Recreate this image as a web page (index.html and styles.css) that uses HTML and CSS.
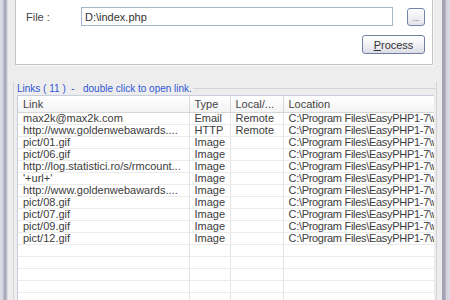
FILE: index.html
```html
<!DOCTYPE html>
<html>
<head>
    <meta charset="UTF-8">
    <title>Link Extractor</title>
    <link rel="stylesheet" href="styles.css">
</head>
<body>
    <div class="window">
        <div class="frame frame-left"></div>
        <div class="client">
            <div class="top-panel">
                <div class="file-row">
                    <label class="file-label" for="filePath">File :</label>
                    <input id="filePath" class="file-input" type="text" value="D:\index.php">
                    <button class="browse-btn">...</button>
                </div>
                <div class="action-row">
                    <button class="process-btn"><u>P</u>rocess</button>
                </div>
            </div>

            <div class="group">
                <div class="group-title">
                    <span class="group-caption">Links ( 11 ) &nbsp;- &nbsp; double click to open link.</span>
                    <span class="group-line"></span>
                </div>
                <div class="list">
                    <table class="links">
                        <colgroup>
                            <col class="c-link">
                            <col class="c-type">
                            <col class="c-local">
                            <col class="c-loc">
                        </colgroup>
                        <thead>
                            <tr>
                                <th>Link</th>
                                <th>Type</th>
                                <th>Local/...</th>
                                <th>Location</th>
                            </tr>
                        </thead>
                        <tbody>
                            <tr><td>max2k@max2k.com</td><td>Email</td><td>Remote</td><td class="loc">C:\Program Files\EasyPHP1-7\www\</td></tr>
                            <tr><td>http://www.goldenwebawards....</td><td>HTTP</td><td>Remote</td><td class="loc">C:\Program Files\EasyPHP1-7\www\</td></tr>
                            <tr><td>pict/01.gif</td><td>Image</td><td></td><td class="loc">C:\Program Files\EasyPHP1-7\www\</td></tr>
                            <tr><td>pict/06.gif</td><td>Image</td><td></td><td class="loc">C:\Program Files\EasyPHP1-7\www\</td></tr>
                            <tr><td>http://log.statistici.ro/s/rmcount...</td><td>Image</td><td></td><td class="loc">C:\Program Files\EasyPHP1-7\www\</td></tr>
                            <tr><td>'+url+'</td><td>Image</td><td></td><td class="loc">C:\Program Files\EasyPHP1-7\www\</td></tr>
                            <tr><td>http://www.goldenwebawards....</td><td>Image</td><td></td><td class="loc">C:\Program Files\EasyPHP1-7\www\</td></tr>
                            <tr><td>pict/08.gif</td><td>Image</td><td></td><td class="loc">C:\Program Files\EasyPHP1-7\www\</td></tr>
                            <tr><td>pict/07.gif</td><td>Image</td><td></td><td class="loc">C:\Program Files\EasyPHP1-7\www\</td></tr>
                            <tr><td>pict/09.gif</td><td>Image</td><td></td><td class="loc">C:\Program Files\EasyPHP1-7\www\</td></tr>
                            <tr><td>pict/12.gif</td><td>Image</td><td></td><td class="loc">C:\Program Files\EasyPHP1-7\www\</td></tr>
                            <tr><td></td><td></td><td></td><td></td></tr>
                            <tr><td></td><td></td><td></td><td></td></tr>
                            <tr><td></td><td></td><td></td><td></td></tr>
                            <tr><td></td><td></td><td></td><td></td></tr>
                            <tr><td></td><td></td><td></td><td></td></tr>
                        </tbody>
                    </table>
                </div>
            </div>
        </div>
        <div class="frame frame-right"></div>
    </div>
</body>
</html>
```
FILE: styles.css
```css
body {
    margin: 0;
    width: 450px;
    height: 300px;
    overflow: hidden;
    font-family: "Liberation Sans", Arial, sans-serif;
    font-size: 11px;
    color: #3a3a3a;
    background: #eeeeee;
}

.window {
    display: flex;
    height: 300px;
    overflow: hidden;
}

.frame {
    width: 8px;
    flex: none;
}

.frame-left {
    background: linear-gradient(90deg, #dcdce6 0, #d4d4e0 3px, #a9a9bb 4px, #a9a9bb 6px, #d0d0dc 7px, #e4e4ea 8px);
}

.frame-right {
    background: linear-gradient(90deg, #a2a2b4 0, #a2a2b4 3px, #cfcfdb 4px, #dcdce6 8px);
}

.client {
    flex: 1;
    min-width: 0;
    padding: 0 9px 0 7px;
    background: #ededee;
}

/* top panel */

.top-panel {
    height: 65px;
    background: #fff;
    border: 1px solid #c4c4c8;
    border-top: none;
    box-shadow: 1px 1px 0 #f8f8f8;
    padding: 7px 0 0 10px;
    box-sizing: border-box;
}

.file-row {
    display: flex;
    align-items: center;
    height: 19px;
}

.file-label {
    width: 55px;
    color: #444;
}

.file-input {
    width: 312px;
    height: 19px;
    box-sizing: border-box;
    border: 1px solid #a9b5c9;
    padding: 0 3px;
    font-family: inherit;
    font-size: 11px;
    color: #333;
}

.browse-btn {
    margin-left: 14px;
    width: 18px;
    height: 18px;
    padding: 4px 0 0;
    border: 1px solid #7486a8;
    border-radius: 3px;
    background: linear-gradient(#ffffff, #e2e2ea);
    font-family: inherit;
    font-size: 8px;
    line-height: 8px;
    color: #444;
}

.action-row {
    display: flex;
    justify-content: flex-end;
    margin-top: 9px;
    padding-right: 7px;
}

.process-btn {
    width: 63px;
    height: 19px;
    padding: 0;
    border: 1px solid #6f7f9f;
    border-radius: 3px;
    background: linear-gradient(#ffffff 0, #f2f2f6 50%, #dcdce6 100%);
    font-family: inherit;
    font-size: 11px;
    color: #333;
}

/* links group */

.group {
    margin: 17px -4px 0 -2px;
    padding: 0 2px 0 3px;
    border-left: 1px solid #d4d4d8;
    border-right: 1px solid #d4d4d8;
    height: 240px;
}

.group-title {
    display: flex;
    align-items: center;
    height: 12px;
    margin-left: -3px;
    margin-right: -2px;
}

.group-caption {
    color: #2f55d4;
    font-size: 10px;
    padding: 0 1px 0 3px;
    background: #ededee;
}

.group-line {
    flex: 1;
    border-top: 1px solid #d4d4d8;
}

.list {
    margin-top: 1px;
    background: #fff;
    border: 1px solid #c8cfdc;
    border-right: none;
    height: 260px;
    overflow: hidden;
}

.links {
    border-collapse: collapse;
    table-layout: fixed;
    width: 620px;
}

.c-link { width: 171px; }
.c-type { width: 41px; }
.c-local { width: 53px; }
.c-loc { width: 355px; }

.links th {
    height: 16px;
    padding: 0 0 0 5px;
    text-align: left;
    font-weight: normal;
    color: #444;
    background: linear-gradient(#ffffff, #f3f3f3);
    border-bottom: 1px solid #d6d6d6;
    border-right: 1px solid #d9d9d9;
    white-space: nowrap;
    overflow: hidden;
}

.links td {
    height: 11px;
    padding: 0 0 0 5px;
    line-height: 11px;
    border-bottom: 1px solid #ebebeb;
    border-right: 1px solid #e4e4e4;
    white-space: nowrap;
    overflow: hidden;
    color: #3c3c3c;
}

.links td.loc {
    letter-spacing: -0.3px;
}
```
